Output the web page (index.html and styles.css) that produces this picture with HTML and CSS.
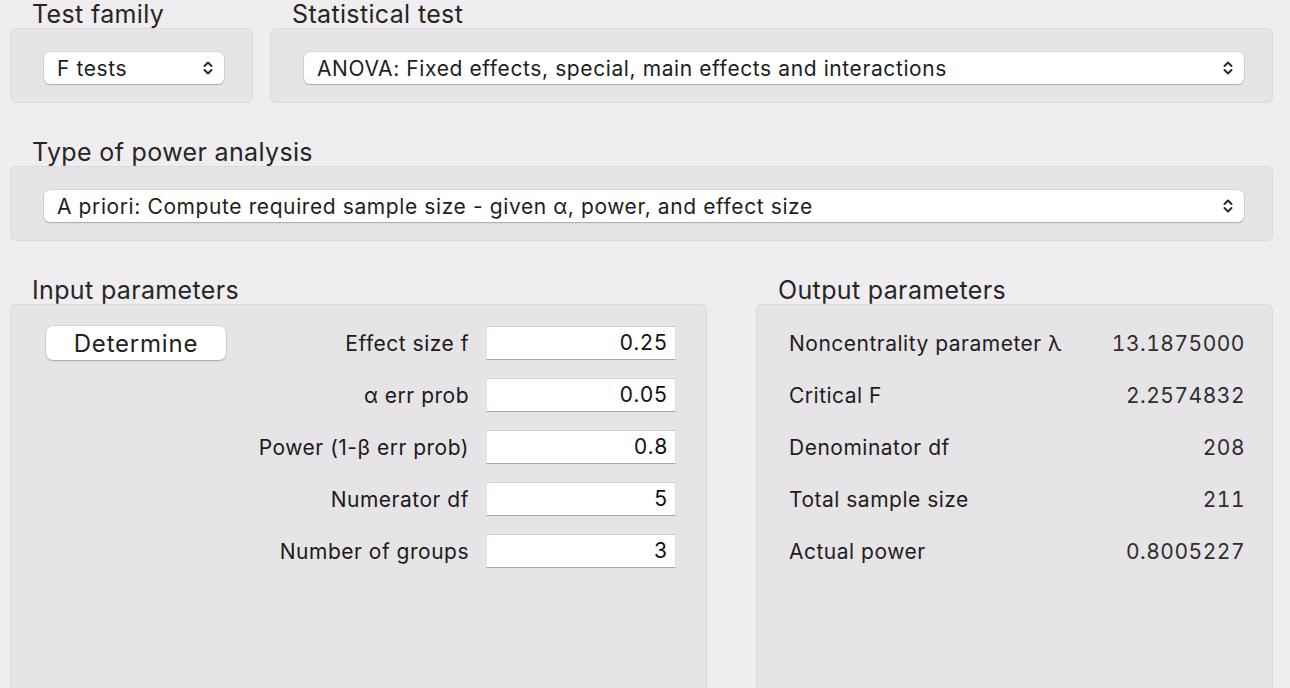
FILE: index.html
```html
<!DOCTYPE html>
<html>
<head>
<meta charset="utf-8">
<link rel="stylesheet" href="styles.css">
</head>
<body>
<div class="app">
  <div class="row row-top">
    <section class="group g-family">
      <h2 class="heading">Test family</h2>
      <div class="panel panel-select">
        <div class="select sel-family">
          <span class="sel-text">F tests</span>
          <svg class="chev" viewBox="0 0 10 16" width="10" height="16"><path d="M1.5 6 L5 2.5 L8.5 6 M1.5 10 L5 13.5 L8.5 10" fill="none" stroke="#2a2a2a" stroke-width="2" stroke-linecap="round" stroke-linejoin="round"/></svg>
        </div>
      </div>
    </section>
    <section class="group g-stat">
      <h2 class="heading">Statistical test</h2>
      <div class="panel panel-select">
        <div class="select sel-wide">
          <span class="sel-text">ANOVA: Fixed effects, special, main effects and interactions</span>
          <svg class="chev" viewBox="0 0 10 16" width="10" height="16"><path d="M1.5 6 L5 2.5 L8.5 6 M1.5 10 L5 13.5 L8.5 10" fill="none" stroke="#2a2a2a" stroke-width="2" stroke-linecap="round" stroke-linejoin="round"/></svg>
        </div>
      </div>
    </section>
  </div>

  <div class="row">
    <section class="group g-full">
      <h2 class="heading">Type of power analysis</h2>
      <div class="panel panel-select">
        <div class="select sel-wide">
          <span class="sel-text">A priori: Compute required sample size - given α, power, and effect size</span>
          <svg class="chev" viewBox="0 0 10 16" width="10" height="16"><path d="M1.5 6 L5 2.5 L8.5 6 M1.5 10 L5 13.5 L8.5 10" fill="none" stroke="#2a2a2a" stroke-width="2" stroke-linecap="round" stroke-linejoin="round"/></svg>
        </div>
      </div>
    </section>
  </div>

  <div class="row row-params">
    <section class="group g-input">
      <h2 class="heading">Input parameters</h2>
      <div class="panel panel-params">
        <div class="input-grid">
          <button class="btn">Determine</button>
          <label class="plabel">Effect size f</label>
          <div class="field">0.25</div>

          <span></span>
          <label class="plabel">α err prob</label>
          <div class="field">0.05</div>

          <span></span>
          <label class="plabel">Power (1-β err prob)</label>
          <div class="field">0.8</div>

          <span></span>
          <label class="plabel">Numerator df</label>
          <div class="field">5</div>

          <span></span>
          <label class="plabel">Number of groups</label>
          <div class="field">3</div>
        </div>
      </div>
    </section>
    <section class="group g-output">
      <h2 class="heading">Output parameters</h2>
      <div class="panel panel-params">
        <div class="output-grid">
          <span class="olabel">Noncentrality parameter λ</span><span class="ovalue">13.1875000</span>
          <span class="olabel">Critical F</span><span class="ovalue">2.2574832</span>
          <span class="olabel">Denominator df</span><span class="ovalue">208</span>
          <span class="olabel">Total sample size</span><span class="ovalue">211</span>
          <span class="olabel">Actual power</span><span class="ovalue">0.8005227</span>
        </div>
      </div>
    </section>
  </div>
</div>
</body>
</html>
```

FILE: styles.css
```css
html, body {
  margin: 0;
  padding: 0;
  background: #efedf0;
  font-family: Inter, "Noto Sans", "Liberation Sans", sans-serif;
  color: #222;
  overflow: hidden;
}

.app {
  padding: 0 17px 0 10px;
  height: 688px;
  display: flex;
  flex-direction: column;
}

.row {
  display: flex;
  margin-top: 35px;
}

.row-top {
  margin-top: 0;
  gap: 17px;
}

.row-params {
  gap: 49px;
  flex: 1;
}

.group {
  display: flex;
  flex-direction: column;
}

.g-family { width: 243px; }
.g-stat { flex: 1; }
.g-full { flex: 1; }
.g-input { width: 697px; }
.g-output { flex: 1; }

.heading {
  margin: 0;
  padding-left: 22px;
  font-size: 25px;
  font-weight: 400;
  line-height: 28px;
  color: #262626;
  letter-spacing: 0.35px;
}

.panel {
  background: #e6e4e7;
  border: 1px solid #dcdadd;
  border-radius: 6px;
  box-sizing: border-box;
}

.panel-select {
  height: 75px;
  padding: 23px 28px 0 33px;
}

.select {
  height: 32px;
  background: #fff;
  border-radius: 6px;
  box-shadow: 0 0 0 0.5px rgba(0,0,0,0.12), 0 1px 1.5px rgba(0,0,0,0.22);
  display: flex;
  align-items: center;
  padding: 0 11px 0 13px;
  box-sizing: border-box;
}

.sel-family { width: 180px; }
.sel-wide { width: 100%; }

.sel-text {
  flex: 1;
  font-size: 21px;
  letter-spacing: 0.6px;
  color: #1e1e1e;
  white-space: nowrap;
}

.chev { flex: none; }

.panel-params {
  flex: 1;
  border-bottom: none;
  border-bottom-left-radius: 0;
  border-bottom-right-radius: 0;
}

.input-grid {
  display: grid;
  grid-template-columns: 180px 1fr 190px;
  grid-auto-rows: 34px;
  column-gap: 17px;
  row-gap: 18px;
  padding: 21px 30px 0 35px;
  align-items: center;
}

.btn {
  height: 34px;
  background: #fff;
  border: none;
  border-radius: 7px;
  box-shadow: 0 0 0 0.5px rgba(0,0,0,0.12), 0 1px 1.5px rgba(0,0,0,0.22);
  font-family: inherit;
  font-size: 24px;
  letter-spacing: 0.8px;
  color: #222;
  padding: 0;
}

.plabel {
  text-align: right;
  font-size: 21px;
  letter-spacing: 0.5px;
  color: #1a1a1a;
  white-space: nowrap;
}

.field {
  height: 34px;
  background: #fff;
  border-top: 1px solid #d4d2d5;
  border-bottom: 1px solid #a9a7aa;
  border-left: 1px solid #e2e0e3;
  border-right: 1px solid #e2e0e3;
  box-sizing: border-box;
  text-align: right;
  padding-right: 7px;
  font-size: 21px;
  letter-spacing: 0.5px;
  font-feature-settings: "tnum";
  line-height: 32px;
  color: #111;
}

.output-grid {
  display: grid;
  grid-template-columns: 1fr auto;
  grid-auto-rows: 34px;
  row-gap: 18px;
  padding: 21px 27px 0 32px;
  align-items: center;
}

.olabel {
  font-size: 21px;
  letter-spacing: 0.5px;
  color: #1e1e1e;
  white-space: nowrap;
}

.ovalue {
  font-size: 21px;
  letter-spacing: 0.5px;
  font-feature-settings: "tnum";
  color: #2e2e2e;
  text-align: right;
}
```
